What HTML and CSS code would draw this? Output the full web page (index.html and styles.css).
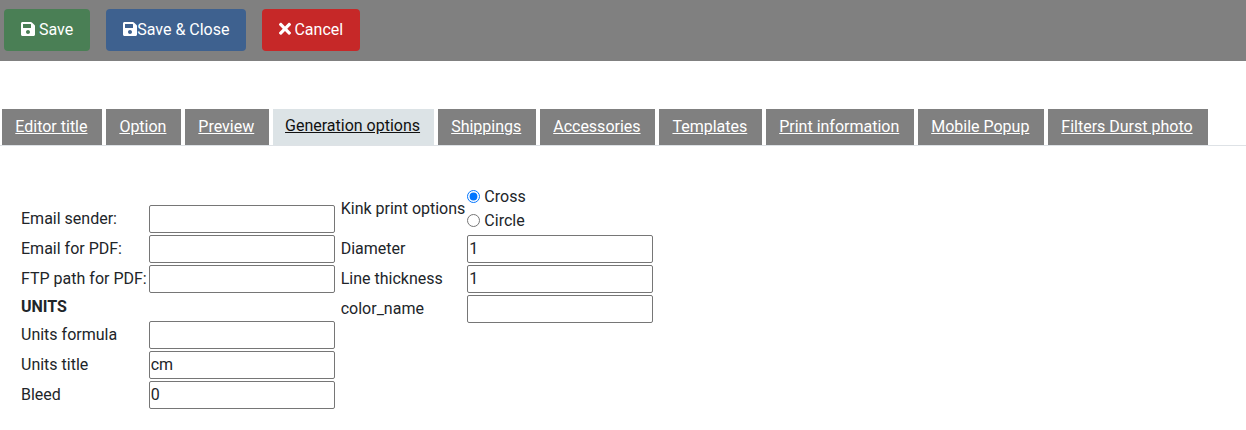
FILE: index.html
```html
<!DOCTYPE html>
<html lang="en">
<head>
    <meta charset="UTF-8">
    <meta name="viewport" content="width=device-width, initial-scale=1.0">
    <title>Generation options</title>
    <link rel="stylesheet" href="styles.css">
</head>
<body>
    <div class="toolbar">
        <button class="btn btn-save">
            <svg class="icon" viewBox="0 0 448 512"><path d="M433.941 129.941l-83.882-83.882A48 48 0 0 0 316.118 32H48C21.49 32 0 53.49 0 80v352c0 26.51 21.49 48 48 48h352c26.51 0 48-21.49 48-48V163.882a48 48 0 0 0-14.059-33.941zM224 416c-35.346 0-64-28.654-64-64 0-35.346 28.654-64 64-64s64 28.654 64 64c0 35.346-28.654 64-64 64zm96-304.52V212c0 6.627-5.373 12-12 12H76c-6.627 0-12-5.373-12-12V108c0-6.627 5.373-12 12-12h228.52c3.183 0 6.235 1.264 8.485 3.515l3.48 3.48A11.996 11.996 0 0 1 320 111.48z"/></svg>
            Save
        </button>
        <button class="btn btn-close">
            <svg class="icon" viewBox="0 0 448 512"><path d="M433.941 129.941l-83.882-83.882A48 48 0 0 0 316.118 32H48C21.49 32 0 53.49 0 80v352c0 26.51 21.49 48 48 48h352c26.51 0 48-21.49 48-48V163.882a48 48 0 0 0-14.059-33.941zM224 416c-35.346 0-64-28.654-64-64 0-35.346 28.654-64 64-64s64 28.654 64 64c0 35.346-28.654 64-64 64zm96-304.52V212c0 6.627-5.373 12-12 12H76c-6.627 0-12-5.373-12-12V108c0-6.627 5.373-12 12-12h228.52c3.183 0 6.235 1.264 8.485 3.515l3.48 3.48A11.996 11.996 0 0 1 320 111.48z"/></svg>Save &amp; Close
        </button>
        <button class="btn btn-cancel">
            <svg class="icon icon-times" viewBox="0 0 352 512"><path d="M242.72 256l100.07-100.07c12.28-12.28 12.28-32.19 0-44.48l-22.24-22.24c-12.28-12.28-32.19-12.28-44.48 0L176 189.28 75.93 89.21c-12.28-12.28-32.19-12.28-44.48 0L9.21 111.45c-12.28 12.28-12.28 32.19 0 44.48L109.28 256 9.21 356.07c-12.28 12.28-12.28 32.19 0 44.48l22.24 22.24c12.28 12.28 32.2 12.28 44.48 0L176 322.72l100.07 100.07c12.28 12.28 32.2 12.28 44.48 0l22.24-22.24c12.28-12.28 12.28-32.19 0-44.48L242.72 256z"/></svg>
            Cancel
        </button>
    </div>

    <ul class="tabs">
        <li><a href="#">Editor title</a></li>
        <li><a href="#">Option</a></li>
        <li><a href="#">Preview</a></li>
        <li class="active"><a href="#">Generation options</a></li>
        <li><a href="#">Shippings</a></li>
        <li><a href="#">Accessories</a></li>
        <li><a href="#">Templates</a></li>
        <li><a href="#">Print information</a></li>
        <li><a href="#">Mobile Popup</a></li>
        <li><a href="#">Filters Durst photo</a></li>
    </ul>

    <div class="panel">
        <table class="form-table table-left">
            <tr><td>Email sender:</td><td><input type="text"></td></tr>
            <tr><td>Email for PDF:</td><td><input type="text"></td></tr>
            <tr><td>FTP path for PDF:</td><td><input type="text"></td></tr>
            <tr class="section"><td colspan="2"><b>UNITS</b></td></tr>
            <tr><td>Units formula</td><td><input type="text"></td></tr>
            <tr><td>Units title</td><td><input type="text" value="cm"></td></tr>
            <tr><td>Bleed</td><td><input type="text" value="0"></td></tr>
        </table>
        <table class="form-table">
            <tr>
                <td>Kink print options</td>
                <td>
                    <label class="radio"><input type="radio" name="kink" checked>Cross</label>
                    <label class="radio"><input type="radio" name="kink">Circle</label>
                </td>
            </tr>
            <tr><td>Diameter</td><td><input type="text" value="1"></td></tr>
            <tr><td>Line thickness</td><td><input type="text" value="1"></td></tr>
            <tr><td>color_name</td><td><input type="text"></td></tr>
        </table>
    </div>
</body>
</html>
```

FILE: styles.css
```css
body {
    font-family: Roboto, Arial, sans-serif;
    font-size: 16px;
    color: #212529;
    margin: 0;
    padding: 0;
    background-color: white;
}
.toolbar {
    background-color: #808080;
    height: 61px;
    padding: 9px 4px 0;
    box-sizing: border-box;
    display: flex;
    align-items: flex-start;
    gap: 16px;
}
.btn {
    height: 42px;
    padding: 0 16px 2px;
    border: 1px solid transparent;
    border-radius: 4px;
    color: white;
    font-family: inherit;
    font-size: 16px;
    white-space: nowrap;
}
.btn-save {
    background-color: #4a7f55;
}
.btn-close {
    background-color: #3e618f;
}
.btn-cancel {
    background-color: #c62828;
}
.icon {
    width: 14px;
    height: 16px;
    fill: white;
    vertical-align: -2px;
}
.icon-times {
    width: 12px;
    height: 17.5px;
    margin-right: -1px;
    vertical-align: -3px;
}
.tabs {
    list-style-type: none;
    margin: 48px 0 0;
    padding: 0 0 0 2px;
    display: flex;
    gap: 4px;
    height: 37px;
    box-sizing: border-box;
    border-bottom: 1px solid #dee2e6;
}
.tabs li {
    background-color: #808080;
    height: 36px;
    padding: 0 14.6px 0 13.3px;
    line-height: 36px;
    white-space: nowrap;
}
.tabs li:last-child {
    padding-right: 15px;
}
.tabs a {
    color: white;
}
.tabs li.active {
    background-color: #dce3e6;
    padding: 0 13.8px 0 12.2px;
    line-height: 34px;
}
.tabs li.active a {
    color: #111;
}
.panel {
    display: flex;
    align-items: flex-start;
    gap: 2px;
    padding: 37px 0 0 19px;
}
.form-table {
    border-spacing: 2px;
    border-collapse: separate;
}
.table-left {
    margin-top: 20px;
}
.form-table td {
    padding: 0;
    white-space: nowrap;
}
.form-table td:first-child {
    padding-bottom: 2px;
}
.section td {
    height: 22px;
}
input[type="text"] {
    display: block;
    width: 186px;
    height: 28px;
    box-sizing: border-box;
    padding: 0 1px 2px;
    border: 1px solid #767676;
    border-radius: 2px;
    font-family: inherit;
    font-size: 16px;
    color: #212529;
}
.radio {
    display: flex;
    align-items: center;
    box-sizing: border-box;
    height: 24px;
    padding-bottom: 2px;
}
.radio input {
    margin: 0 4px 0 0;
    width: 13px;
    height: 13px;
}
```
